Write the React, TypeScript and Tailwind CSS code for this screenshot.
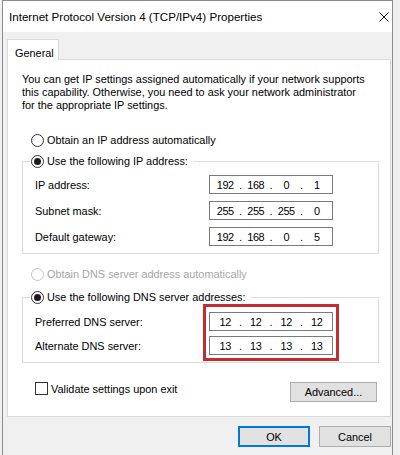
import React from 'react';

const Radio = ({ checked, disabled }: { checked?: boolean; disabled?: boolean }) => (
  <span
    className={`w-[13px] h-[13px] rounded-full border bg-white flex items-center justify-center shrink-0 ${
      disabled ? 'border-[#c4c4c4]' : 'border-[#333333]'
    }`}
  >
    {checked && <span className="w-[7px] h-[7px] rounded-full bg-[#1a1a1a]" />}
  </span>
);

const IpBox = ({ parts }: { parts: string[] }) => (
  <div className="w-[124px] h-[19px] border border-[#7a7a7a] bg-white flex items-center">
    {parts.map((p, i) => (
      <React.Fragment key={i}>
        {i > 0 && <span className="w-0 flex justify-center">.</span>}
        <span className="flex-1 text-center tracking-[-0.4px]">{p}</span>
      </React.Fragment>
    ))}
  </div>
);

const Row = ({ label, parts }: { label: string; parts: string[] }) => (
  <div className="flex items-center h-[19px]">
    <span className="w-[174px] shrink-0">{label}</span>
    <IpBox parts={parts} />
  </div>
);

export default function App() {
  return (
    <div className="w-[400px] h-[455px] overflow-hidden bg-[#f0f0f0] text-[10.9px] leading-[14px] text-black font-['Liberation_Sans',Arial,sans-serif]">
      <div className="ml-[2px] w-[391px] h-full border-l border-r border-t border-[#8a8a8a] flex flex-col">
        {/* title bar */}
        <div className="h-[31px] bg-white flex items-center justify-between pl-[6px] pr-[3px]">
          <span className="text-[11.6px]">Internet Protocol Version 4 (TCP/IPv4) Properties</span>
          <svg width="10" height="10" viewBox="0 0 10 10">
            <path d="M0.5 0.5 L9.5 9.5 M9.5 0.5 L0.5 9.5" stroke="#111" strokeWidth="1" fill="none" />
          </svg>
        </div>

        <div className="flex-1 bg-[#f0f0f0] pt-[7px] pl-[4px] pr-[1px]">
          {/* tab */}
          <div className="relative z-10 w-[52px] h-[21px] bg-white border border-b-0 border-[#d9d9d9] pl-[7px] pt-[6px]">
            General
          </div>

          {/* panel */}
          <div className="-mt-px h-[358px] bg-white border border-[#d9d9d9]">
            <div className="pt-[13px] pl-[14px] leading-[13px] whitespace-nowrap">
              You can get IP settings assigned automatically if your network supports
              <br />
              this capability. Otherwise, you need to ask your network administrator
              <br />
              for the appropriate IP settings.
            </div>

            <div className="mt-[20px] ml-[23px] h-[16px] flex items-center gap-[3px]">
              <Radio />
              <span>Obtain an IP address automatically</span>
            </div>

            <fieldset className="mt-[5px] ml-[14px] mr-[11px] border border-[#dcdcdc] pb-[7px]">
              <legend className="ml-[7px] pl-[1px] pr-[5px]">
                <span className="flex items-center h-[16px] gap-[3px]">
                  <Radio checked />
                  <span>Use the following IP address:</span>
                </span>
              </legend>
              <div className="mt-[6px] pl-[12px] flex flex-col gap-[7px]">
                <Row label="IP address:" parts={['192', '168', '0', '1']} />
                <Row label="Subnet mask:" parts={['255', '255', '255', '0']} />
                <Row label="Default gateway:" parts={['192', '168', '0', '5']} />
              </div>
            </fieldset>

            <div className="mt-[12px] ml-[23px] h-[16px] flex items-center gap-[3px] text-[#a6a6a6]">
              <Radio disabled />
              <span>Obtain DNS server address automatically</span>
            </div>

            <fieldset className="mt-[7px] ml-[14px] mr-[11px] border border-[#dcdcdc] pb-[7px]">
              <legend className="ml-[7px] pl-[1px] pr-[5px]">
                <span className="flex items-center h-[16px] gap-[3px]">
                  <Radio checked />
                  <span>Use the following DNS server addresses:</span>
                </span>
              </legend>
              <div className="relative mt-[7px] pl-[12px] flex flex-col gap-[5px]">
                <Row label="Preferred DNS server:" parts={['12', '12', '12', '12']} />
                <Row label="Alternate DNS server:" parts={['13', '13', '13', '13']} />
                {/* highlight annotation */}
                <div className="absolute left-[180px] top-[-8px] w-[136px] h-[57px] border-[3px] border-[#c62a32]" />
              </div>
            </fieldset>

            <div className="mt-[19px] flex justify-between items-start">
              <div className="ml-[27px] flex items-center gap-[3px] h-[13px]">
                <span className="w-[13px] h-[13px] border border-[#333333] bg-white shrink-0" />
                <span>Validate settings upon exit</span>
              </div>
              <button className="mr-[13px] w-[87px] h-[20px] border border-[#adadad] bg-[#e1e1e1] flex items-center justify-center">
                Advanced...
              </button>
            </div>
          </div>

          {/* dialog buttons */}
          <div className="mt-[9px] flex justify-end gap-[9px]">
            <button className="w-[72px] h-[21px] border-2 border-[#0078d7] bg-[#e1e1e1] flex items-center justify-center">
              OK
            </button>
            <button className="w-[72px] h-[21px] border border-[#adadad] bg-[#e1e1e1] flex items-center justify-center">
              Cancel
            </button>
          </div>
        </div>
      </div>
    </div>
  );
}
